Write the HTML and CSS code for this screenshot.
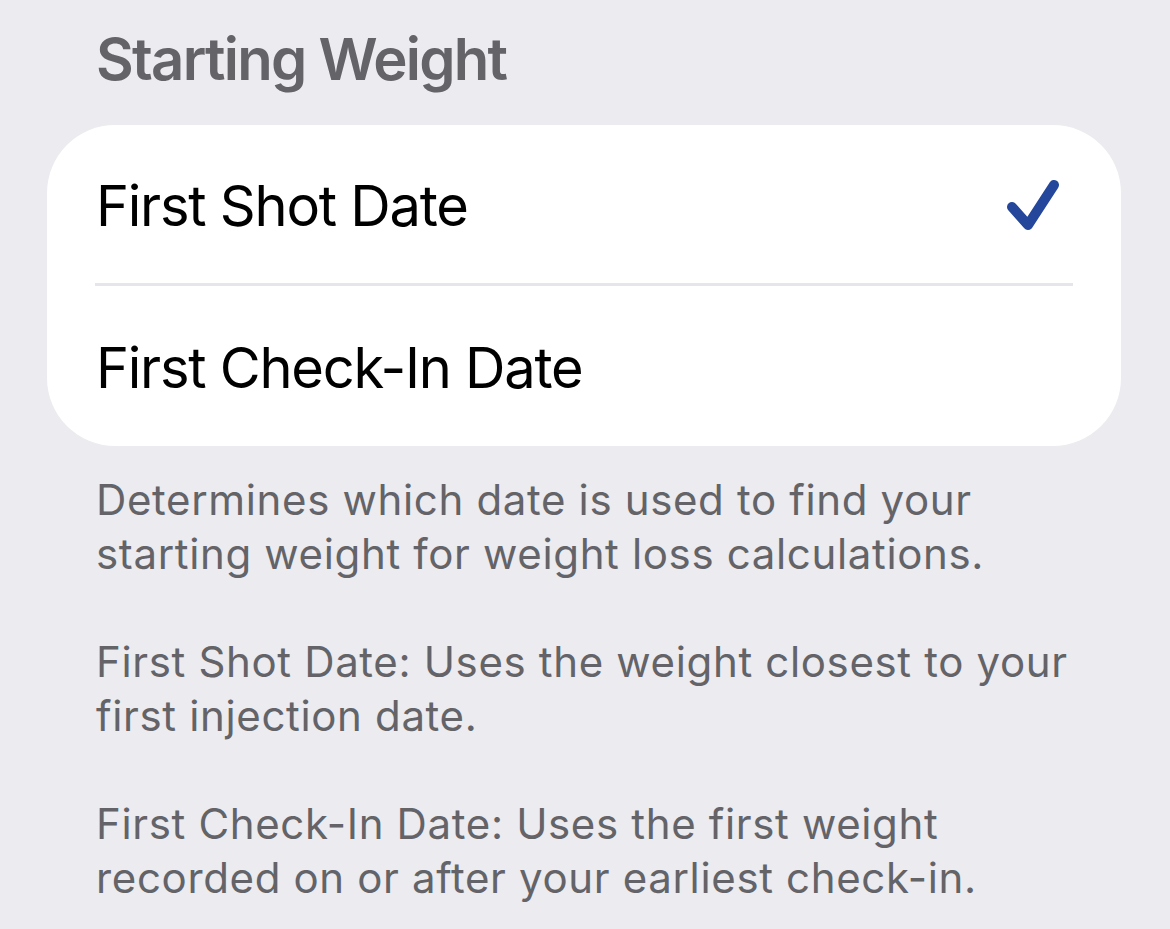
FILE: index.html
```html
<!DOCTYPE html>
<html lang="en">
<head>
<meta charset="utf-8">
<title>Starting Weight</title>
<link rel="stylesheet" href="styles.css">
</head>
<body>
<main class="screen">
  <h2 class="section-header">Starting Weight</h2>
  <div class="card">
    <div class="row">
      <span class="row-label">First Shot Date</span>
      <svg class="check" width="64" height="60" viewBox="0 0 64 60" aria-hidden="true">
        <path d="M12 31 L28 49 L54 9" fill="none" stroke="#24479b" stroke-width="10" stroke-linecap="round" stroke-linejoin="round"/>
      </svg>
    </div>
    <div class="separator"></div>
    <div class="row row-last">
      <span class="row-label">First Check-In Date</span>
    </div>
  </div>
  <div class="footer">
    <p>Determines which date is used to find your<br>starting weight for weight loss calculations.</p>
    <p>First Shot Date: Uses the weight closest to your<br>first injection date.</p>
    <p>First Check-In Date: Uses the first weight<br>recorded on or after your earliest check-in.</p>
  </div>
</main>
</body>
</html>
```
FILE: styles.css
```css
html, body {
  margin: 0;
  padding: 0;
  background: #ebebf0;
}
body {
  font-family: Inter, "Noto Sans", "Liberation Sans", sans-serif;
  width: 1170px;
  height: 929px;
  overflow: hidden;
}
.screen {
  padding-top: 24px;
}
.section-header {
  margin: 0 0 31px 0;
  padding-left: 96px;
  font-size: 58px;
  line-height: 70px;
  font-weight: 600;
  color: #636368;
  letter-spacing: -1.7px;
}
.card {
  margin: 0 49px 0 47px;
  background: #ffffff;
  border-radius: 68px;
  overflow: hidden;
}
.row {
  height: 158px;
  display: flex;
  align-items: center;
  justify-content: space-between;
  padding: 4px 48px 0 49px;
  box-sizing: border-box;
}
.row-last {
  height: 160px;
}
.row-label {
  font-size: 56px;
  color: #000000;
  letter-spacing: -1.25px;
}
.check {
  margin-right: 9px;
}
.separator {
  height: 3px;
  margin: 0 48px 0 48px;
  background: #e5e5ea;
}
.footer {
  margin-top: 27px;
  padding-left: 96px;
  font-size: 42px;
  line-height: 54px;
  color: #636368;
  letter-spacing: 0.65px;
}
.footer p {
  margin: 0 0 54px 0;
}
```
